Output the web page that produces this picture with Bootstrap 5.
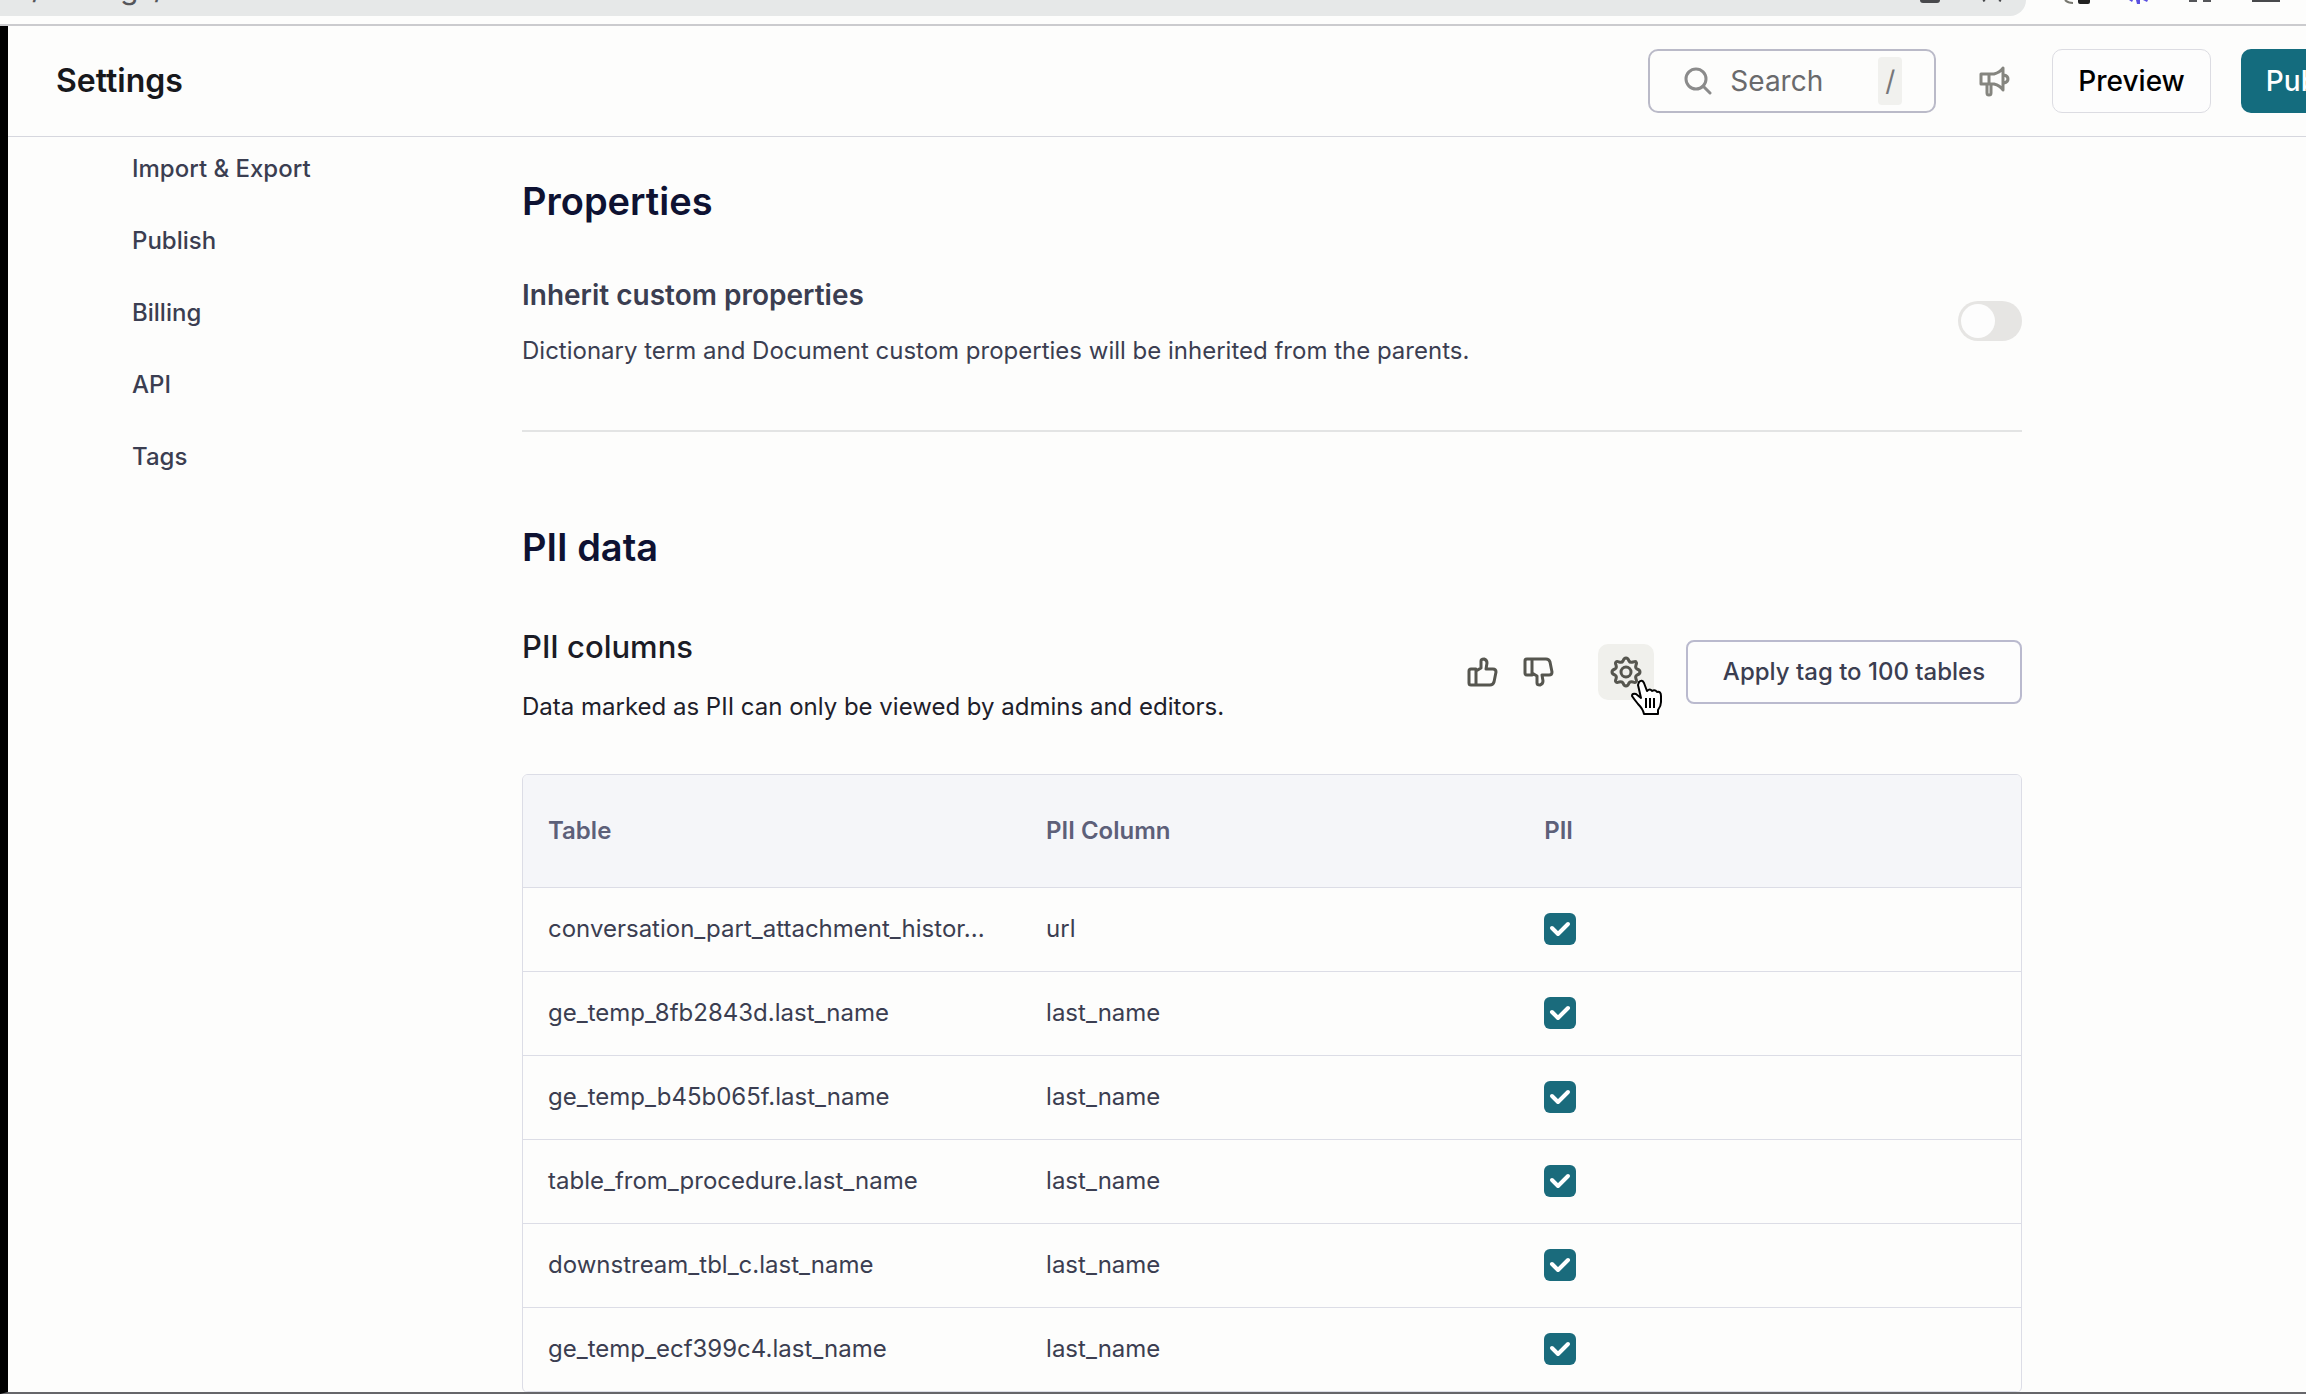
<!DOCTYPE html>
<html lang="en">
<head>
<meta charset="utf-8">
<meta name="viewport" content="width=device-width, initial-scale=1">
<title>Settings</title>
<link href="https://cdn.jsdelivr.net/npm/bootstrap@5.3.0/dist/css/bootstrap.min.css" rel="stylesheet">
<style>
  :root { --teal: #1a6b7c; --ink: #3b3e51; --line: #dcdde6; }
  html, body { height: 100%; }
  body { font-family: Inter, "Liberation Sans", sans-serif; font-size: 24px; line-height: 32px; color: var(--ink); background: #fdfdfc; overflow: hidden; }
  svg { display: block; flex: none; }
  .browser-bar { height: 26px; border-bottom: 2px solid #cbcbce; }
  .url-pill { height: 16px; background: #e6e8e8; border-radius: 0 0 20px 0; padding: 0 20px 0 32px; }
  .url-text { font-size: 30px; line-height: 32px; color: #55565a; margin-top: -28px; }
  .tools { padding: 0 26px 0 38px; }
  .workspace { border-left: 8px solid #000; border-bottom: 2px solid #66666a; min-height: 0; }
  .topbar { height: 111px; border-bottom: 1px solid #d6d7de; padding: 0 0 0 48px; margin-right: -83px; gap: 30px; }
  .page-title { font-size: 32px; line-height: 40px; font-weight: 600; color: #17181c; }
  .search-box { width: 288px; height: 64px; border: 2px solid #babac8; border-radius: 10px; padding: 0 32px 0 34px; gap: 18px; }
  .search-box input { font-size: 28px; line-height: 36px; color: #6a6a6c; border: 0; background: none; padding: 0; min-width: 0; outline: 0; flex: 1 1 0; }
  .search-box input::placeholder { color: #6a6a6c; opacity: 1; }
  .search-box kbd { background: #f1f1ee; color: #77777a; font: inherit; font-size: 28px; line-height: 48px; padding: 0; width: 24px; border-radius: 4px; text-align: center; }
  .top-btn { height: 64px; border-radius: 10px; font-size: 28px; line-height: 36px; padding: 0 25px; flex: none; }
  .btn-preview { border: 1px solid #dcdce2; color: #000; font-weight: 500; background: #fdfdfd; }
  .btn-publish { background: #146c7e; color: #fff; font-weight: 500; border: 0; }
  .side { width: 514px; flex: none; padding: 16px 0 0 124px; }
  .side a { color: var(--ink); text-decoration: none; font-weight: 500; }
  .content-area { padding: 40px 284px 0 0; min-width: 0; }
  .section-title { font-size: 38px; line-height: 48px; font-weight: 600; color: #0e1232; margin: 0; }
  .section-row { margin-top: 50px; }
  .sub-title { font-size: 28px; line-height: 40px; font-weight: 600; margin: 0 0 20px; }
  .sub-title-dark { font-size: 31px; line-height: 40px; font-weight: 500; color: #1b1c26; margin: 0 0 24px; }
  .dark-text { color: #1e202a; }
  .pii-intro { padding-top: 6px; }
  .switch-input.form-check-input { width: 64px; height: 40px; margin: 0; background-color: #e6e5e3; border: 0; box-shadow: none;
    background-size: 40px 40px; background-image: url("data:image/svg+xml,%3csvg xmlns='http://www.w3.org/2000/svg' viewBox='0 0 40 40'%3e%3ccircle cx='20' cy='20' r='17' fill='%23fdfdfd'/%3e%3c/svg%3e"); }
  .rule { border-top: 2px solid #e3e4e4; margin-top: 63px; margin-bottom: 91px; }
  .icon-btn { border: 0; background: none; padding: 0; width: 56px; height: 56px; border-radius: 10px; display: flex; flex: none; align-items: center; justify-content: center; color: #56564f; position: relative; }
  .icon-btn.is-hover { background: #f0f0ec; margin: 0 32px 0 32px; }
  .icon-btn.is-muted { color: #85857f; }
  .pointer { position: absolute; left: 32px; top: 34px; }
  .btn-apply { height: 64px; min-width: 336px; border: 2px solid #babace; border-radius: 8px; color: var(--ink); font-size: 24px; font-weight: 500; padding: 0 32px; background: #fdfdfd; white-space: nowrap; }
  .pii-box { border: 1px solid var(--line); border-radius: 6px; overflow: hidden; margin-top: 51px; }
  .pii-table { table-layout: fixed; width: 100%; margin: 0; font-size: 24px; line-height: 32px; --bs-table-bg: transparent; --bs-table-color: var(--ink); }
  .pii-table > :not(caption) > * > * { padding: 0 25px; height: 84px; vertical-align: middle; border-bottom: 1px solid var(--line); color: var(--ink); box-shadow: none; }
  .pii-table > thead > tr > th { height: 112px; background: #f5f6f9; color: #5d6079; font-weight: 600; }
  .pii-table .form-check-input { width: 32px; height: 32px; margin: 0; display: block; border: 0; border-radius: 6px; }
  .pii-table .form-check-input:checked { background-color: var(--teal); background-size: 32px 32px;
    background-image: url("data:image/svg+xml,%3csvg xmlns='http://www.w3.org/2000/svg' viewBox='0 0 32 32'%3e%3cpath d='M8 15l6 6 10-10' fill='none' stroke='%23fff' stroke-width='4' stroke-linecap='round' stroke-linejoin='round'/%3e%3c/svg%3e"); }
</style>
</head>
<body class="d-flex flex-column">

<div class="browser-bar d-flex flex-shrink-0 overflow-hidden">
  <div class="url-pill d-flex flex-grow-1 overflow-hidden">
    <span class="url-text me-auto">/settings/</span>
    <svg width="88" height="6" viewBox="0 0 88 6" aria-hidden="true">
      <path d="M2 0h20q0 3-3 3H5Q2 3 2 0z" fill="#48494c"/>
      <path d="M65 1l2-1M83 1l-2-1" stroke="#48494c" stroke-width="2"/>
    </svg>
  </div>
  <div class="tools">
    <svg width="216" height="6" viewBox="0 0 216 6" aria-hidden="true">
      <path d="M1 0q3 3 8 3" fill="none" stroke="#77776f" stroke-width="2"/>
      <path d="M14 0h12v2q0 2-2 2h-8q-2 0-2-2z" fill="#222"/>
      <path d="M65 0l3 2 1-2zM72 0h4v4h-3zM79 0l4 2 1-2z" fill="#5a50e0"/>
      <path d="M125 1h8M139 1h8" stroke="#55565a" stroke-width="2"/>
      <path d="M188 1h28" stroke="#48494c" stroke-width="2"/>
    </svg>
  </div>
</div>

<div class="workspace d-flex flex-column flex-grow-1 overflow-hidden">
  <header class="topbar d-flex align-items-center flex-shrink-0">
    <h1 class="page-title mb-0 me-auto">Settings</h1>
    <label class="search-box d-flex align-items-center">
      <svg width="28" height="28" viewBox="0 0 28 28" fill="none" stroke="#8b8b8b" stroke-width="3" stroke-linecap="round" aria-hidden="true"><circle cx="12" cy="12" r="10"/><path d="M19 19l7 7"/></svg>
      <input type="text" placeholder="Search" aria-label="Search">
      <kbd>/</kbd>
    </label>
    <button type="button" class="icon-btn is-muted" aria-label="Announcements">
      <svg width="32" height="32" viewBox="0 0 32 32" fill="none" stroke="currentColor" stroke-width="3" stroke-linejoin="round" stroke-linecap="round"><path d="M3 9h13c4-1 7-3 9-6v22c-2-3-5-5-9-6H3zM11 9v10M9 19v9q0 2 2 2t2-2v-9M26 10q4 1 4 4t-4 4"/></svg>
    </button>
    <button type="button" class="btn top-btn btn-preview">Preview</button>
    <button type="button" class="btn top-btn btn-publish">Publish</button>
  </header>

  <div class="d-flex flex-grow-1 overflow-hidden">
    <nav class="side d-flex flex-column" aria-label="Settings sections">
      <a class="mb-4 pb-3" href="#">Import &amp; Export</a>
      <a class="mb-4 pb-3" href="#">Publish</a>
      <a class="mb-4 pb-3" href="#">Billing</a>
      <a class="mb-4 pb-3" href="#">API</a>
      <a href="#">Tags</a>
    </nav>

    <main class="content-area flex-grow-1">
      <section>
        <h2 class="section-title">Properties</h2>
        <div class="section-row d-flex align-items-center justify-content-between">
          <label for="inherit">
            <span class="sub-title d-block">Inherit custom properties</span>
            <span class="d-block">Dictionary term and Document custom properties will be inherited from the parents.</span>
          </label>
          <div class="form-switch p-0"><input class="form-check-input switch-input" type="checkbox" role="switch" id="inherit"></div>
        </div>
      </section>
      <div class="rule"></div>
      <section>
        <h2 class="section-title">PII data</h2>
        <div class="section-row d-flex align-items-center">
          <div class="pii-intro me-auto">
            <h3 class="sub-title-dark">PII columns</h3>
            <p class="mb-0 dark-text">Data marked as PII can only be viewed by admins and editors.</p>
          </div>
          <button type="button" class="icon-btn" aria-label="Thumbs up">
            <svg width="32" height="32" viewBox="0 0 32 32" fill="none" stroke="currentColor" stroke-width="3" stroke-linejoin="round" stroke-linecap="round"><path d="M3 15q0-2 2-2h5v16H5q-2 0-2-2zM10 15l5-3V5q0-2 3-2 3 1 3 4l-1 6h7q3 0 3 3l-2 10q-1 3-4 3H10"/></svg>
          </button>
          <button type="button" class="icon-btn" aria-label="Thumbs down">
            <svg width="32" height="32" viewBox="0 0 32 32" fill="none" stroke="currentColor" stroke-width="3" stroke-linejoin="round" stroke-linecap="round"><path d="M3 17q0 2 2 2h5V3H5Q3 3 3 5zM10 17l5 3v7q0 2 3 2 3-1 3-4l-1-6h7q3 0 3-3L28 6q-1-3-4-3H10"/></svg>
          </button>
          <button type="button" class="icon-btn is-hover" aria-label="Configure">
            <svg width="32" height="32" viewBox="0 0 32 32" fill="none" stroke="currentColor" stroke-width="3" stroke-linejoin="round"><circle cx="16" cy="16" r="5"/><path d="M16 2q2 0 3 3 1 2 4 1 3-1 3 0 1 1 0 3-1 3 1 4 3 1 3 3t-3 3q-2 1-1 4 1 2 0 3t-3 0q-3-1-4 1-1 3-3 3t-3-3q-1-2-4-1-2 1-3 0t0-3q1-3-1-4-3-1-3-3t3-3q2-1 1-4-1-2 0-3t3 0q3 1 4-1 1-3 3-3z"/></svg>
            <svg class="pointer" width="34" height="40" viewBox="0 0 34 40" aria-hidden="true"><path d="M9 4q3-3 5 1l3 8q3-3 5 0 3-2 5 1 4-1 4 4v6q0 4-3 8v4H14q-1-5-6-10-4-5-6-8 0-3 4-2l5 4L8 7z" fill="#fff" stroke="#000" stroke-width="2" stroke-linejoin="round"/><path d="M16 20v10M20 20v10M24 20v10" stroke="#000" stroke-width="2"/></svg>
          </button>
          <button type="button" class="btn btn-apply">Apply tag to 100 tables</button>
        </div>
        <div class="pii-box">
          <table class="table pii-table">
            <colgroup><col style="width:33.25%"><col style="width:33.25%"><col></colgroup>
            <thead><tr><th scope="col">Table</th><th scope="col">PII Column</th><th scope="col">PII</th></tr></thead>
            <tbody>
              <tr><td class="text-nowrap">conversation_part_attachment_histor...</td><td>url</td><td><input class="form-check-input" type="checkbox" checked aria-label="PII: url"></td></tr>
              <tr><td>ge_temp_8fb2843d.last_name</td><td>last_name</td><td><input class="form-check-input" type="checkbox" checked aria-label="PII: ge_temp_8fb2843d"></td></tr>
              <tr><td>ge_temp_b45b065f.last_name</td><td>last_name</td><td><input class="form-check-input" type="checkbox" checked aria-label="PII: ge_temp_b45b065f"></td></tr>
              <tr><td>table_from_procedure.last_name</td><td>last_name</td><td><input class="form-check-input" type="checkbox" checked aria-label="PII: table_from_procedure"></td></tr>
              <tr><td>downstream_tbl_c.last_name</td><td>last_name</td><td><input class="form-check-input" type="checkbox" checked aria-label="PII: downstream_tbl_c"></td></tr>
              <tr><td>ge_temp_ecf399c4.last_name</td><td>last_name</td><td><input class="form-check-input" type="checkbox" checked aria-label="PII: ge_temp_ecf399c4"></td></tr>
            </tbody>
          </table>
        </div>
      </section>
    </main>
  </div>
</div>
<script src="https://cdn.jsdelivr.net/npm/bootstrap@5.3.0/dist/js/bootstrap.bundle.min.js"></script>
</body>
</html>
